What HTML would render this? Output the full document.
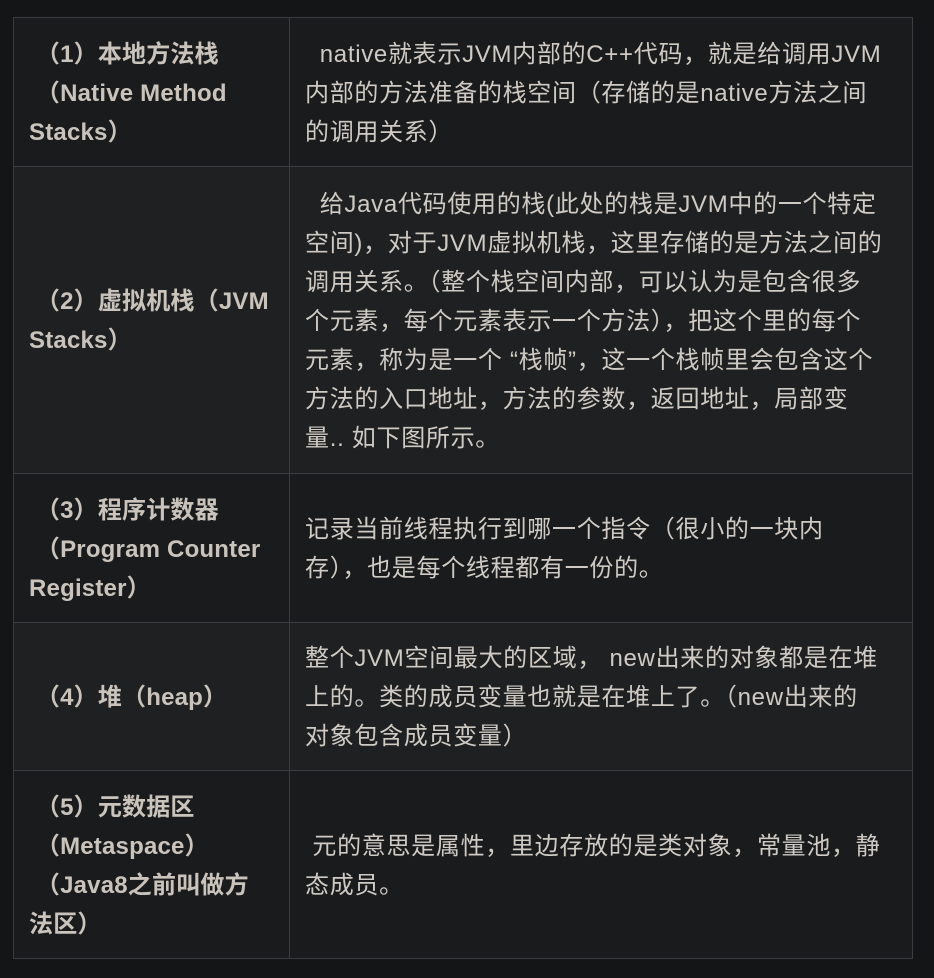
<!DOCTYPE html>
<html><head><meta charset="utf-8"><style>
html,body{margin:0;padding:0;background:#141517;width:934px;height:978px;overflow:hidden}
table{position:absolute;left:13px;top:17px;border-collapse:collapse;width:900px;table-layout:fixed;
font-family:"Liberation Sans","Noto Sans CJK SC",sans-serif;font-size:24px;line-height:39px;color:#cfcac3;letter-spacing:0.7px}
td{border:1px solid #3a3b3e;padding:16px 15px 14px;white-space:nowrap;vertical-align:middle;overflow:hidden}
td.l{width:245px;font-weight:bold;color:#c9c3bb;letter-spacing:0.2px}
tr:nth-child(odd){background:#1a1b1d}
tr:nth-child(even){background:#1f2022}
</style></head><body>
<table>
<colgroup><col style="width:276px"><col></colgroup>
<tr style="height:149px"><td class="l">&nbsp;（1）本地方法栈<br>&nbsp;（Native Method<br>Stacks）</td><td>&nbsp;&nbsp;native就表示JVM内部的C++代码，就是给调用JVM<br>内部的方法准备的栈空间（存储的是native方法之间<br>的调用关系）</td></tr>
<tr style="height:307px"><td class="l">&nbsp;（2）虚拟机栈（JVM<br>Stacks）</td><td>&nbsp;&nbsp;给Java代码使用的栈(此处的栈是JVM中的一个特定<br>空间)，对于JVM虚拟机栈，这里存储的是方法之间的<br>调用关系。（整个栈空间内部，可以认为是包含很多<br>个元素，每个元素表示一个方法），把这个里的每个<br>元素，称为是一个 “栈帧”，这一个栈帧里会包含这个<br>方法的入口地址，方法的参数，返回地址，局部变<br>量.. 如下图所示。</td></tr>
<tr style="height:149px"><td class="l">&nbsp;（3）程序计数器<br>&nbsp;（Program Counter<br>Register）</td><td>记录当前线程执行到哪一个指令（很小的一块内<br>存），也是每个线程都有一份的。</td></tr>
<tr style="height:148px"><td class="l">&nbsp;（4）堆（heap）</td><td>整个JVM空间最大的区域， new出来的对象都是在堆<br>上的。类的成员变量也就是在堆上了。（new出来的<br>对象包含成员变量）</td></tr>
<tr style="height:188px"><td class="l">&nbsp;（5）元数据区<br>&nbsp;（Metaspace）<br>&nbsp;（Java8之前叫做方<br>法区）</td><td>&nbsp;元的意思是属性，里边存放的是类对象，常量池，静<br>态成员。</td></tr>
</table>
</body></html>
